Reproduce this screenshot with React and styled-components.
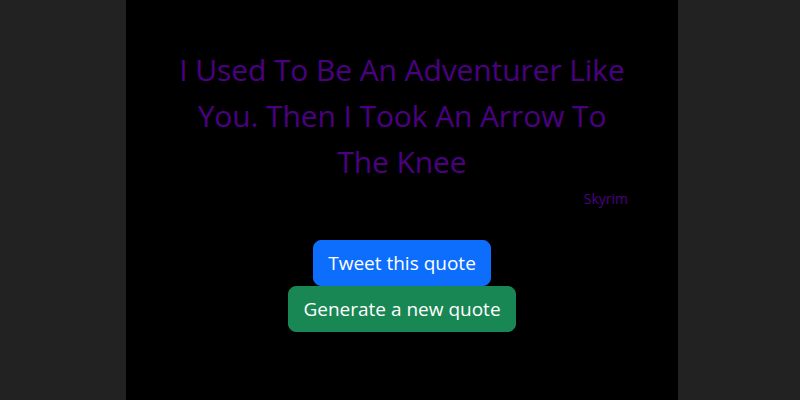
import React from "react";
import styled, { createGlobalStyle } from "styled-components";

const Global = createGlobalStyle`
  html, body { margin: 0; padding: 0; background: #222222; height: 100%; }
  #root { height: 100%; }
  * { box-sizing: border-box; }
`;

const Page = styled.div`
  height: 400px;
  display: flex;
  justify-content: center;
  padding-left: 4px;
`;

const Panel = styled.main`
  width: 552px;
  height: 100%;
  background: #000;
  padding: 47px 50px 0;
  font-family: "Segoe UI", "Open Sans", "Noto Sans", sans-serif;
  display: flex;
  flex-direction: column;
`;

const Quote = styled.h1`
  margin: 0;
  font-weight: 400;
  font-size: 30px;
  line-height: 46px;
  letter-spacing: -0.1px;
  color: #4b0082;
  text-align: center;
`;

const Author = styled.p`
  margin: 3px 0 0;
  text-align: right;
  font-size: 14px;
  line-height: 22px;
  color: #4b0082;
`;

const Actions = styled.div`
  margin-top: 30px;
  display: flex;
  flex-direction: column;
  align-items: center;
`;

const Button = styled.button`
  font-family: inherit;
  font-size: 19px;
  line-height: 28px;
  padding: 8px 14px;
  border: 1px solid ${(p) => p.$bg};
  border-radius: 8px;
  background: ${(p) => p.$bg};
  color: #fff;
  cursor: pointer;
`;

export default function App() {
  return (
    <>
      <Global />
      <Page>
        <Panel>
          <Quote>I Used To Be An Adventurer Like You. Then I Took An Arrow To The Knee</Quote>
          <Author>Skyrim</Author>
          <Actions>
            <Button $bg="#0d6efd">Tweet this quote</Button>
            <Button $bg="#198754">Generate a new quote</Button>
          </Actions>
        </Panel>
      </Page>
    </>
  );
}
